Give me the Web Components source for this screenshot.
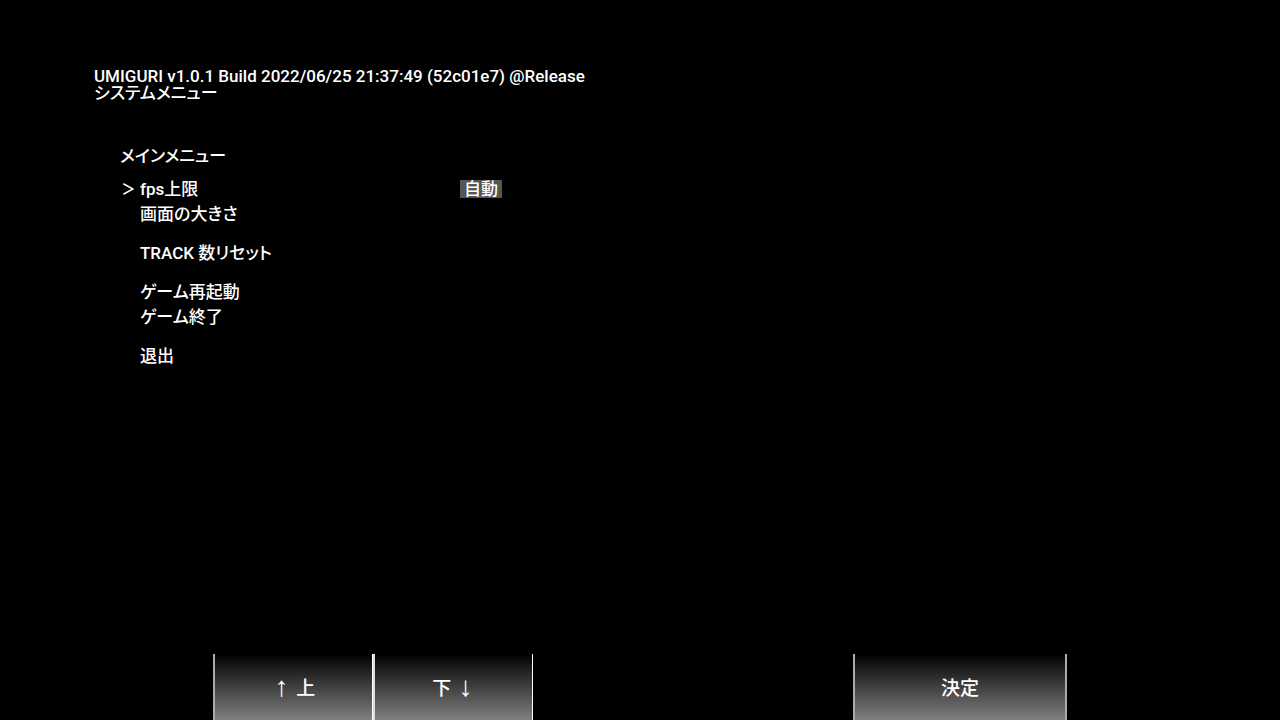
<!DOCTYPE html>
<html lang="ja">
<head>
<meta charset="utf-8">
<meta name="viewport" content="width=device-width, initial-scale=1">
<title>UMIGURI システムメニュー</title>
<style>
  html, body { margin: 0; background: #000; }
  body { color: #fff; font: 500 17px/16px Roboto, "Noto Sans CJK JP", sans-serif; font-feature-settings: "palt"; }
</style>
</head>
<body>
<system-screen>
  <system-header slot="header">
    UMIGURI v1.0.1 Build 2022/06/25 21:37:49 (52c01e7) @Release
    <span slot="subtitle">システムメニュー</span>
  </system-header>
  <menu-list heading="メインメニュー">
    <menu-item selected>fps上限<span slot="value">自動</span></menu-item>
    <menu-item>画面の大きさ</menu-item>
    <menu-item group>TRACK 数リセット</menu-item>
    <menu-item group>ゲーム再起動</menu-item>
    <menu-item>ゲーム終了</menu-item>
    <menu-item group>退出</menu-item>
  </menu-list>
  <key-bar slot="keys">
    <key-button class="up"><span slot="before">↑</span>上</key-button>
    <key-button class="down">下<span slot="after">↓</span></key-button>
    <key-button class="enter">決定</key-button>
  </key-bar>
</system-screen>
<script>
const define = (name, html) => {
  customElements.define(name, class extends HTMLElement {
    constructor() {
      super();
      this.attachShadow({ mode: 'open' }).innerHTML = html;
    }
    connectedCallback() {
      const heading = this.shadowRoot.querySelector('h2');
      if (heading) heading.textContent = this.getAttribute('heading');
    }
  });
};

define('system-screen', `
  <style>
    :host { display: flex; flex-direction: column; min-height: 100vh; }
    main { flex: 1; padding: 67px 94px 24px; }
  </style>
  <main><slot name="header"></slot><slot></slot></main>
  <slot name="keys"></slot>`);

define('system-header', `
  <style>
    :host { display: block; }
    h1, p { margin: 0; font: inherit; }
    h1 { line-height: 18px; }
  </style>
  <h1><slot></slot></h1>
  <p><slot name="subtitle"></slot></p>`);

define('menu-list', `
  <style>
    :host { display: block; padding: 47px 0 0 26px; }
    h2 { margin: 0 0 12px; font: inherit; }
    nav { display: flex; flex-direction: column; }
  </style>
  <h2></h2>
  <nav><slot></slot></nav>`);

define('menu-item', `
  <style>
    :host { display: block; }
    :host([group]) { margin-top: 14px; }
    button {
      display: grid; grid-template-columns: 20px 320px auto; justify-content: start;
      align-items: center; width: 100%; height: 25px; padding: 0; border: 0;
      background: none; color: inherit; font: inherit; text-align: left;
      font-feature-settings: inherit;
    }
    svg { display: block; margin-left: 3px; visibility: hidden; }
    :host([selected]) svg { visibility: visible; }
    ::slotted([slot="value"]) { display: block; padding: 1px 4px; background: #555; }
  </style>
  <button type="button">
    <svg width="11" height="12" viewBox="0 0 11 12" fill="none" stroke="#fff" stroke-width="1.6" aria-hidden="true"><path d="M0.4 0.8 10 6 0.4 11.2"/></svg>
    <span><slot></slot></span>
    <slot name="value"></slot>
  </button>`);

define('key-bar', `
  <style>
    :host { display: grid; grid-template-columns: 4fr 3fr 3fr 6fr 4fr 4fr; }
    ::slotted(.up) { grid-column: 2; }
    ::slotted(.down) { grid-column: 3; }
    ::slotted(.enter) { grid-column: 5; }
  </style>
  <slot></slot>`);

define('key-button', `
  <style>
    :host { display: block; }
    button {
      display: flex; align-items: center; justify-content: center; gap: 5px;
      width: 100%; height: 66px; padding: 4px 0 0;
      border: solid #fff; border-width: 0 1px 0 2px; border-left-color: #aaa;
      background: linear-gradient(#000, #808080) border-box; color: inherit;
      font: inherit; font-size: 19px; line-height: 24px;
    }
    :host(.down) button { border-left-color: #ddd; }
    :host(.enter) button { border-right: 2px solid #aaa; }
    ::slotted(span) { width: 19px; text-align: center; font-family: "Liberation Sans", sans-serif; font-size: 28px; line-height: 20px; padding-bottom: 4px; }
  </style>
  <button type="button"><slot name="before"></slot><span><slot></slot></span><slot name="after"></slot></button>`);
</script>
</body>
</html>
